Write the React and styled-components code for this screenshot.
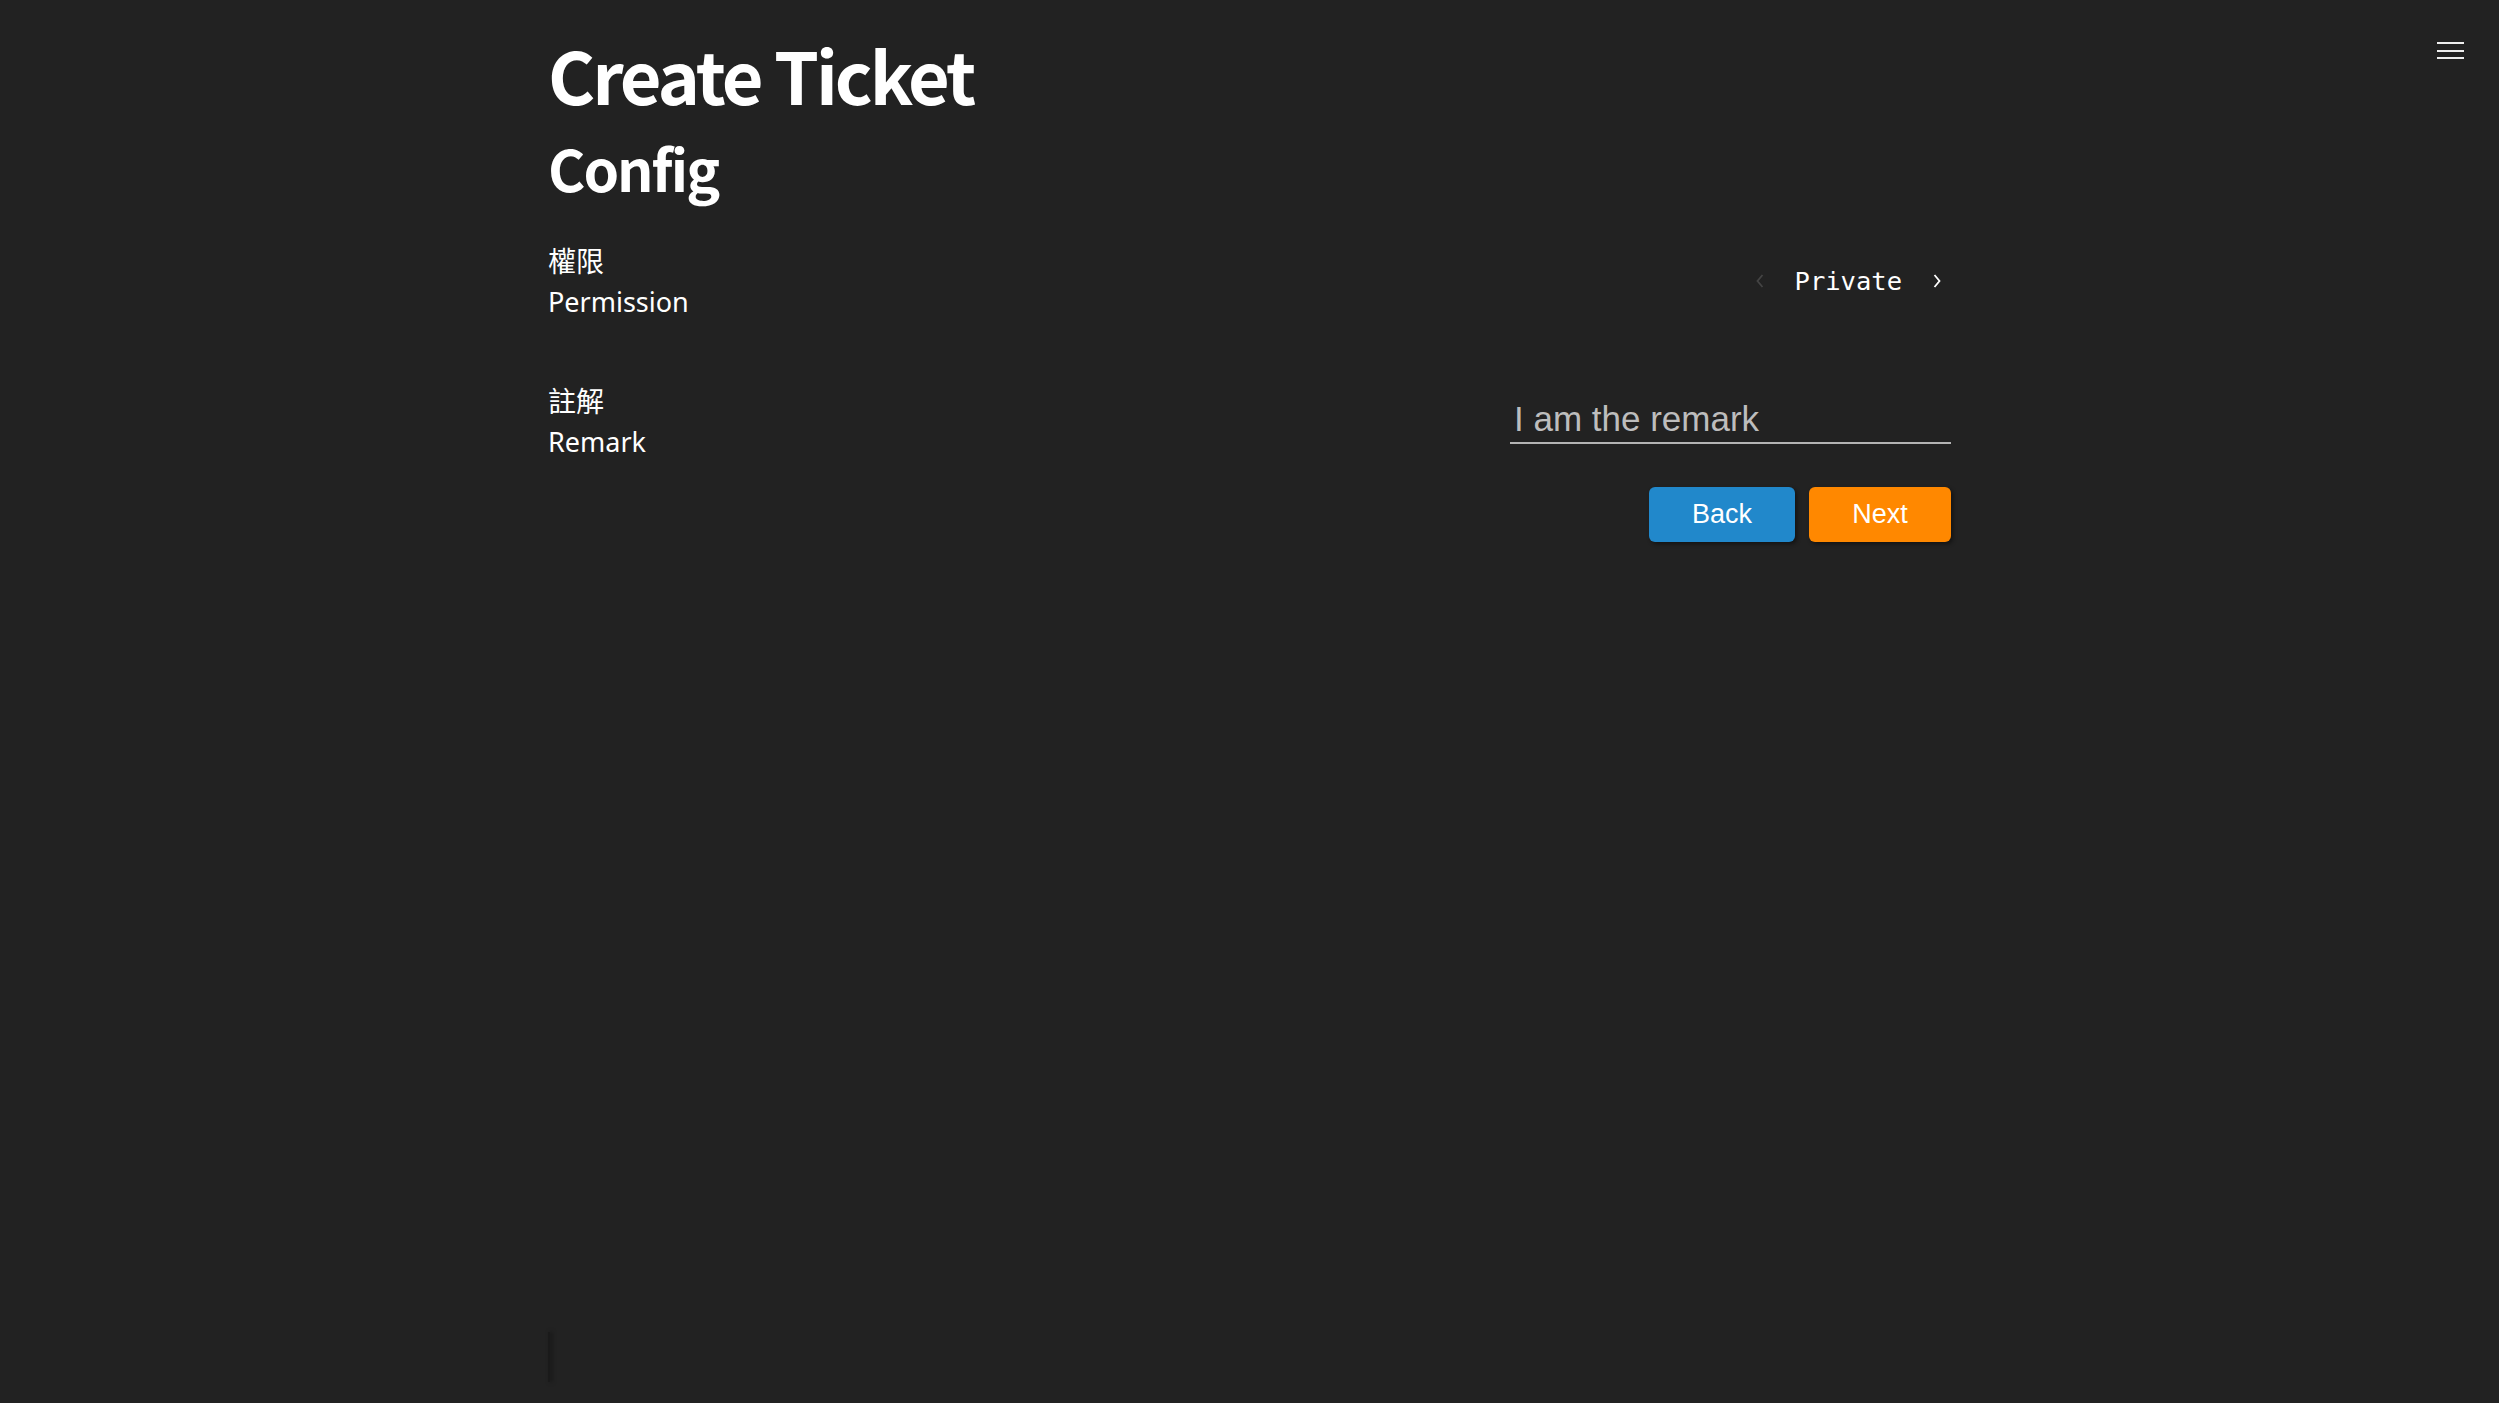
import React, { useState } from "react";
import styled, { createGlobalStyle } from "styled-components";

const GlobalStyle = createGlobalStyle`
  html, body {
    margin: 0;
    padding: 0;
    background-color: #222222;
  }
  * {
    box-sizing: border-box;
  }
`;

const OPTIONS = ["Private", "Public"];

export default function App() {
  const [perm, setPerm] = useState(0);

  return (
    <Page>
      <GlobalStyle />
      <MenuButton aria-label="menu">
        <span />
        <span />
        <span />
      </MenuButton>

      <Container>
        <Title>Create Ticket</Title>
        <SubTitle>Config</SubTitle>

        <Form>
          <Row>
            <Label>
              <span>權限</span>
              <span>Permission</span>
            </Label>
            <Selector>
              <Arrow
                disabled={perm === 0}
                onClick={() => setPerm(perm - 1)}
                aria-label="previous"
              >
                <svg width="10" height="16" viewBox="0 0 10 16">
                  <path
                    d="M7.5 2 L2.5 8 L7.5 14"
                    fill="none"
                    stroke="currentColor"
                    strokeWidth="1.8"
                  />
                </svg>
              </Arrow>
              <Value>{OPTIONS[perm]}</Value>
              <Arrow
                disabled={perm === OPTIONS.length - 1}
                onClick={() => setPerm(perm + 1)}
                aria-label="next"
              >
                <svg width="10" height="16" viewBox="0 0 10 16">
                  <path
                    d="M2.5 2 L7.5 8 L2.5 14"
                    fill="none"
                    stroke="currentColor"
                    strokeWidth="1.8"
                  />
                </svg>
              </Arrow>
            </Selector>
          </Row>

          <Row>
            <Label>
              <span>註解</span>
              <span>Remark</span>
            </Label>
            <RemarkInput placeholder="I am the remark" />
          </Row>

          <Actions>
            <ActionButton color="#2188cb" width="146px">
              Back
            </ActionButton>
            <ActionButton color="#ff8800" width="142px">
              Next
            </ActionButton>
          </Actions>
        </Form>
      </Container>

      <Footer>
        <Handle />
      </Footer>
    </Page>
  );
}

const Page = styled.div`
  min-height: 100vh;
  display: flex;
  flex-direction: column;
  background-color: #222222;
`;

const MenuButton = styled.button`
  position: fixed;
  top: 42px;
  right: 35px;
  display: flex;
  flex-direction: column;
  gap: 5.5px;
  padding: 0;
  border: none;
  background: none;
  cursor: pointer;

  span {
    display: block;
    width: 27px;
    height: 2px;
    background-color: #eeeeee;
  }
`;

const Container = styled.div`
  width: 1403px;
  margin: 0 auto;
  padding-top: 29px;
`;

const Title = styled.h1`
  margin: 0;
  font-family: "Noto Sans CJK TC", "Noto Sans", sans-serif;
  font-weight: 700;
  font-size: 72px;
  line-height: 90px;
  letter-spacing: -3px;
  color: #ffffff;
`;

const SubTitle = styled.h2`
  margin: 13px 0 0;
  font-family: "Noto Sans CJK TC", "Noto Sans", sans-serif;
  font-weight: 700;
  font-size: 57px;
  line-height: 70px;
  letter-spacing: -2px;
  color: #ffffff;
`;

const Form = styled.div`
  display: flex;
  flex-direction: column;
  gap: 58px;
  margin-top: 38px;
`;

const Row = styled.div`
  display: flex;
  justify-content: space-between;
  align-items: center;
`;

const Label = styled.div`
  display: flex;
  flex-direction: column;
  font-family: "Noto Sans", "Noto Sans CJK TC", sans-serif;
  font-size: 27px;
  line-height: 41px;
  color: #ffffff;

  span:first-child {
    font-family: "Noto Sans CJK TC", sans-serif;
    font-size: 28px;
  }
`;

const Selector = styled.div`
  display: flex;
  align-items: center;
`;

const Arrow = styled.button`
  width: 28px;
  height: 40px;
  display: flex;
  align-items: center;
  justify-content: center;
  padding: 0;
  border: none;
  background: none;
  cursor: pointer;
  color: ${(p) => (p.disabled ? "#444444" : "#ffffff")};
`;

const Value = styled.span`
  margin: 0 21px;
  font-family: "DejaVu Sans Mono", "Liberation Mono", monospace;
  font-size: 25.5px;
  color: #ffffff;
`;

const RemarkInput = styled.input`
  width: 441px;
  padding: 0 4px 3px;
  border: none;
  border-bottom: 2px solid #b4b4b4;
  background: transparent;
  outline: none;
  font-family: "Liberation Sans", Arial, sans-serif;
  font-size: 35px;
  color: #dddddd;

  &::placeholder {
    color: #bdbdbd;
  }
`;

const Actions = styled.div`
  display: flex;
  justify-content: flex-end;
  gap: 14px;
  margin-top: -33px;
`;

const ActionButton = styled.button`
  width: ${(p) => p.width};
  height: 55px;
  border: none;
  border-radius: 6px;
  background-color: ${(p) => p.color};
  box-shadow: 2px 2px 4px rgba(0, 0, 0, 0.45);
  font-family: "Liberation Sans", Arial, sans-serif;
  font-size: 27px;
  color: #ffffff;
  cursor: pointer;
`;

const Footer = styled.div`
  width: 1403px;
  margin: auto auto 0;
  padding-bottom: 21px;
`;

const Handle = styled.div`
  width: 2px;
  height: 50px;
  background-color: #1a1a1a;
  box-shadow: 2px 0 4px rgba(0, 0, 0, 0.5);
`;
